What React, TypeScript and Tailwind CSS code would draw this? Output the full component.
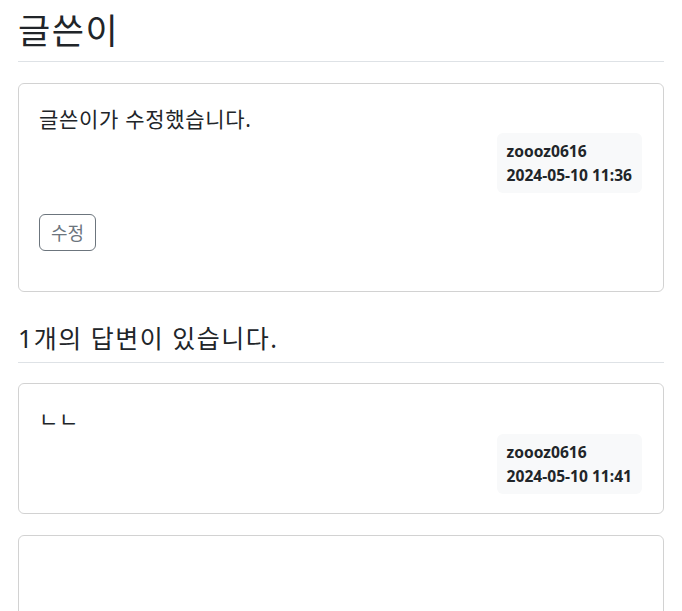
const kr = "font-['Noto_Sans','Noto_Sans_CJK_KR',sans-serif]"

function Meta({ user, date }: { user: string; date: string }) {
  return (
    <div className="flex justify-end">
      <div className="rounded-md bg-[#f8f9fa] px-[10px] py-[6px] text-[15.6px] font-bold leading-[24px] text-[#212529]">
        <div>{user}</div>
        <div>{date}</div>
      </div>
    </div>
  )
}

export default function App() {
  return (
    <div className={`${kr} px-[18px] text-[#212529] bg-white min-h-[611px]`}>
      <h2 className="border-b border-[#dee2e6] pt-[12px] pb-[11px] text-[35px] font-normal leading-[38px] tracking-[1.5px]">
        글쓴이
      </h2>

      <div className="mt-[21px] rounded-md border border-black/[.175]">
        <div className="pl-[20px] pr-[21px] pt-[23px] pb-[40px]">
          <div className="text-[21px] leading-[24px] tracking-[0.7px]">글쓴이가 수정했습니다.</div>
          <div className="mt-[2px]">
            <Meta user="zoooz0616" date="2024-05-10 11:36" />
          </div>
          <button className="mt-[21px] rounded-md border border-[#6c757d] px-[11px] h-[37px] text-[18px] leading-[24px] text-[#6c757d]">
            수정
          </button>
        </div>
      </div>

      <h5 className="mt-[21px] border-b border-[#dee2e6] pt-[8px] pb-[7px] text-[25px] font-normal leading-[34px] tracking-[1.5px]">
        1개의 답변이 있습니다.
      </h5>

      <div className="mt-[20px] rounded-md border border-black/[.175]">
        <div className="pl-[20px] pr-[21px] pt-[23px] pb-[19px]">
          <div className="text-[21px] leading-[24px] tracking-[0.7px]">ㄴㄴ</div>
          <div className="mt-[3px]">
            <Meta user="zoooz0616" date="2024-05-10 11:41" />
          </div>
        </div>
      </div>

      <div className="mt-[21px] h-[160px] rounded-md border border-black/[.175]"></div>
    </div>
  )
}
